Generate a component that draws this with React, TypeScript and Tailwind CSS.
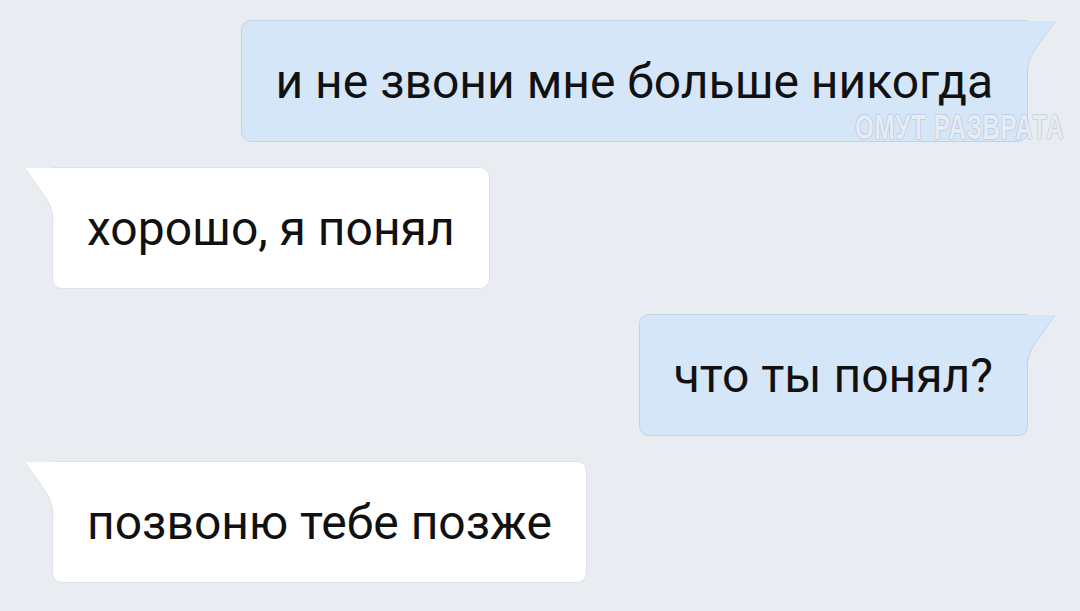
import React from 'react'

type Side = 'in' | 'out'

// bubble tail, drawn at the top outer corner of the bubble
function Tail({ side }: { side: Side }) {
  const fill = side === 'out' ? '#d6e6f9' : '#ffffff'
  const stroke = side === 'out' ? '#c3d3e6' : '#dde2e8'
  if (side === 'out') {
    return (
      <svg
        width="32"
        height="52"
        viewBox="0 0 32 52"
        className="absolute top-0 -right-[30px]"
      >
        <path d="M0 0 L30 0 L9 30 Q3 39 2 52 L0 52 Z" fill={fill} />
        <path d="M30 0.5 L9 30 Q3 39 2 52" fill="none" stroke={stroke} strokeWidth="1" />
      </svg>
    )
  }
  return (
    <svg
      width="32"
      height="52"
      viewBox="0 0 32 52"
      className="absolute top-0 -left-[30px]"
    >
      <path d="M32 0 L2 0 L23 30 Q29 39 30 52 L32 52 Z" fill={fill} />
      <path d="M2 0.5 L23 30 Q29 39 30 52" fill="none" stroke={stroke} strokeWidth="1" />
    </svg>
  )
}

function Bubble({ side, text }: { side: Side; text: string }) {
  const out = side === 'out'
  return (
    <div className={out ? 'flex justify-end pr-[52px]' : 'flex justify-start pl-[52px]'}>
      <div
        className={
          'relative h-[122px] flex items-center px-[34px] text-[48px] text-[#111] ' +
          (out
            ? 'bg-[#d6e6f9] border border-[#c3d3e6] rounded-[10px] rounded-tr-none'
            : 'bg-white border border-[#dde2e8] rounded-[10px] rounded-tl-none')
        }
        style={{ fontFamily: 'Roboto, "Noto Sans", sans-serif' }}
      >
        <span className="whitespace-nowrap leading-none pt-[2px]">{text}</span>
        <Tail side={side} />
      </div>
    </div>
  )
}

export default function App() {
  return (
    <div className="relative w-[1080px] h-[611px] bg-[#e9edf2] overflow-hidden pt-[20px] flex flex-col gap-[25px]">
      <Bubble side="out" text="и не звони мне больше никогда" />
      <Bubble side="in" text="хорошо, я понял" />
      <Bubble side="out" text="что ты понял?" />
      <Bubble side="in" text="позвоню тебе позже" />

      {/* watermark */}
      <div
        className="absolute left-[855px] top-[109px] text-[35px] font-bold tracking-[1px] text-white/75 origin-left scale-x-[0.69] whitespace-nowrap leading-none"
        style={{
          fontFamily: '"Liberation Sans Narrow", "Liberation Sans", sans-serif',
          textShadow:
            '1px 0 0 rgba(150,170,200,0.4), -1px 0 0 rgba(150,170,200,0.4), 0 1px 0 rgba(150,170,200,0.4), 0 -1px 0 rgba(150,170,200,0.4)',
        }}
      >
        ОМУТ РАЗВРАТА
      </div>
    </div>
  )
}
